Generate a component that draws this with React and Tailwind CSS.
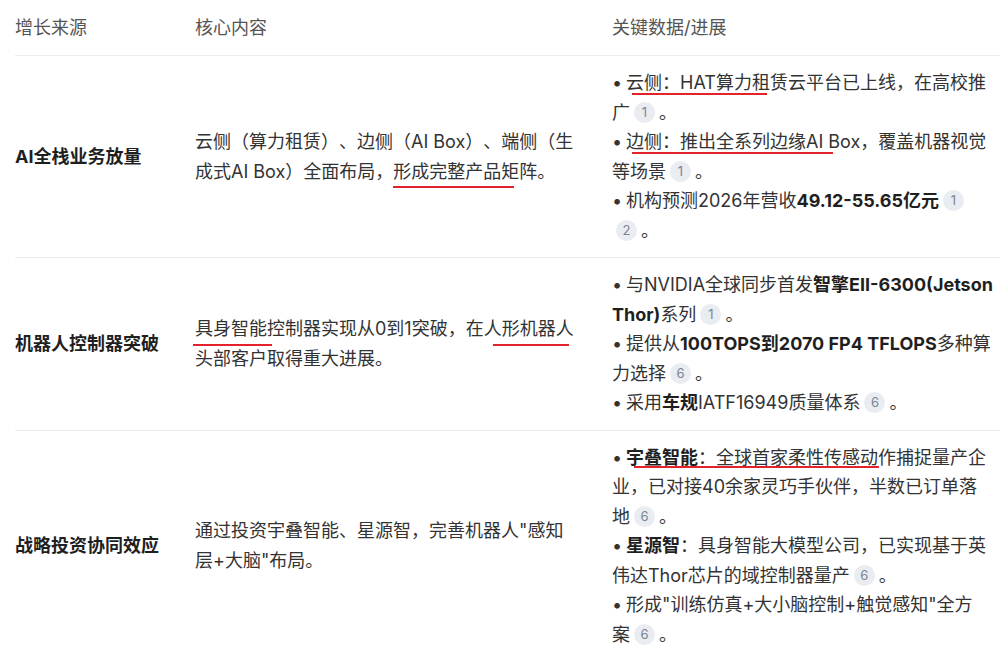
import React from "react";

const FONT = { fontFamily: 'Inter, "Noto Sans CJK SC", sans-serif' };

// little grey citation bubble
function Cite({ n }) {
  return (
    <span className="inline-flex items-center justify-center w-[21px] h-[21px] rounded-full bg-[#e9ecf1] text-[13px] leading-none text-[#7b8494] mx-[4px] align-[2px]">
      {n}
    </span>
  );
}

function End({ n }) {
  return (
    <>
      <Cite n={n} />。
    </>
  );
}

function Dot() {
  return <span className="inline-block w-[14px]">•</span>;
}

function Red({ className }) {
  return <span className={`absolute h-[2px] bg-[#e3222b] ${className}`} />;
}

const cols = "grid grid-cols-[180px_417px_388px] items-center border-b border-[#ececec]";
const body = "leading-[29.5px] text-[#333] whitespace-nowrap";

export default function App() {
  return (
    <div
      style={FONT}
      className="w-[1000px] h-[651px] overflow-hidden bg-white text-[18px] [text-spacing-trim:space-all]"
    >
      <div className="ml-[15px]">
        {/* header */}
        <div className={`${cols} h-[56px] text-[#555]`}>
          <div>增长来源</div>
          <div>核心内容</div>
          <div>关键数据/进展</div>
        </div>

        {/* row 1 */}
        <div className={`${cols} py-3`}>
          <div className="font-bold text-[#1f1f1f]">AI全栈业务放量</div>
          <div className={body}>
            云侧（算力租赁）、边侧（AI Box）、端侧（生
            <br />
            成式AI Box）全面布局，
            <span className="relative">
              形成完整产品矩阵
              <Red className="left-0 w-[121px] -bottom-[6px]" />
            </span>
            。
          </div>
          <div className={body}>
            <div>
              <Dot />
              <span className="relative">
                云侧：HAT算力租赁
                <Red className="left-[6px] w-[135px] -bottom-[2px]" />
              </span>
              云平台已上线，在高校推
              <br />
              广<End n={1} />
            </div>
            <div>
              <Dot />
              <span className="relative">
                边侧：推出全系列边缘AI Box
                <Red className="left-[6px] w-[201px] -bottom-[2px]" />
              </span>
              ，覆盖机器视觉
              <br />
              等场景<End n={1} />
            </div>
            <div>
              <Dot />
              机构预测2026年营收<b className="text-[#1f1f1f]">49.12-55.65亿元</b>
              <Cite n={1} />
              <br />
              <End n={2} />
            </div>
          </div>
        </div>

        {/* row 2 */}
        <div className={`${cols} py-3`}>
          <div className="font-bold text-[#1f1f1f]">机器人控制器突破</div>
          <div className={body}>
            <span className="relative">
              具身智能
              <Red className="-left-[2px] w-[79px] -bottom-[7px]" />
            </span>
            控制器实现从0到1突破，在
            <span className="relative">
              人形机器人
              <Red className="left-[9px] w-[76px] -bottom-[7px]" />
            </span>
            <br />
            头部客户取得重大进展。
          </div>
          <div className={body}>
            <div>
              <Dot />
              与NVIDIA全球同步首发<b className="text-[#1f1f1f]">智擎EII-6300(Jetson</b>
              <br />
              <b className="text-[#1f1f1f]">Thor)</b>系列<End n={1} />
            </div>
            <div>
              <Dot />
              提供从<b className="text-[#1f1f1f]">100TOPS到2070 FP4 TFLOPS</b>多种算
              <br />
              力选择<End n={6} />
            </div>
            <div>
              <Dot />
              采用<b className="text-[#1f1f1f]">车规</b>IATF16949质量体系<End n={6} />
            </div>
          </div>
        </div>

        {/* row 3 */}
        <div className={`${cols} py-3`}>
          <div className="font-bold text-[#1f1f1f]">战略投资协同效应</div>
          <div className={body}>
            通过投资宇叠智能、星源智，完善机器人"感知
            <br />
            层+大脑"布局。
          </div>
          <div className={body}>
            <div>
              <Dot />
              <span className="relative">
                <b className="text-[#1f1f1f]">宇叠智能</b>：全球首家柔性传感动作
                <Red className="left-[8px] w-[245px] bottom-0" />
              </span>
              捕捉量产企
              <br />
              业，已对接40余家灵巧手伙伴，半数已订单落
              <br />
              地<End n={6} />
            </div>
            <div>
              <Dot />
              <b className="text-[#1f1f1f]">星源智</b>：具身智能大模型公司，已实现基于英
              <br />
              伟达Thor芯片的域控制器量产<End n={6} />
            </div>
            <div>
              <Dot />
              形成"训练仿真+大小脑控制+触觉感知"全方
              <br />
              案<End n={6} />
            </div>
          </div>
        </div>
      </div>
    </div>
  );
}
